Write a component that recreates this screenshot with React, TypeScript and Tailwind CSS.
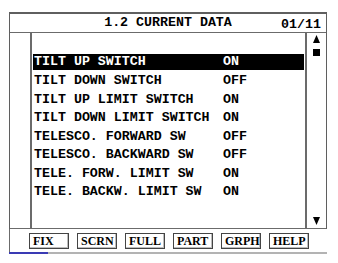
import React from "react";

type Row = { label: string; value: string };

const rows: Row[] = [
  { label: "TILT UP SWITCH", value: "ON" },
  { label: "TILT DOWN SWITCH", value: "OFF" },
  { label: "TILT UP LIMIT SWITCH", value: "ON" },
  { label: "TILT DOWN LIMIT SWITCH", value: "ON" },
  { label: "TELESCO. FORWARD SW", value: "OFF" },
  { label: "TELESCO. BACKWARD SW", value: "OFF" },
  { label: "TELE. FORW. LIMIT SW", value: "ON" },
  { label: "TELE. BACKW. LIMIT SW", value: "ON" },
];

const buttons = ["FIX", "SCRN", "FULL", "PART", "GRPH", "HELP"];

export default function App() {
  const selected = 0;

  return (
    <div className="w-[338px] h-[263px] bg-white pt-[12px] pl-[9px] font-['Liberation_Mono',monospace] text-black">
      <div className="w-[318px]">
        {/* Frame */}
        <div className="border-t-2 border-x border-[#5f5f5f]">
          {/* Header */}
          <div className="relative h-[19px] border-b border-[#6b6b6b] flex items-center justify-center text-[13.3px] font-bold leading-none">
            <span>1.2 CURRENT DATA</span>
            <span className="absolute right-[5px] top-[4px]">01/11</span>
          </div>

          {/* Body */}
          <div className="h-[196px] border-b border-[#6b6b6b] flex">
            <div className="w-[22px] border-r-2 border-[#6b6b6b]" />
            <div className="flex-1 pt-[19.7px]">
              {rows.map((r, i) => (
                <div key={r.label} className="h-[18.6px] flex items-center">
                  <div
                    className={`mx-[1px] flex-1 h-[16px] flex items-center pl-[1px] text-[13.3px] font-bold leading-none ${
                      i === selected ? "bg-black text-white" : ""
                    }`}
                  >
                    <span className="w-[189px] whitespace-pre">{r.label}</span>
                    <span>{r.value}</span>
                  </div>
                </div>
              ))}
            </div>
            {/* Scroll column */}
            <div className="w-[21px] border-l-2 border-[#6b6b6b] flex flex-col items-center pt-[2px] pb-[3px]">
              <svg width="7" height="8" viewBox="0 0 7 8" className="block">
                <polygon points="3.5,0 7,8 0,8" fill="#000" />
              </svg>
              <div className="w-[7px] h-[7px] bg-black mt-[6px]" />
              <div className="flex-1" />
              <svg width="7" height="8" viewBox="0 0 7 8" className="block">
                <polygon points="0,0 7,0 3.5,8" fill="#000" />
              </svg>
            </div>
          </div>
        </div>

        {/* Button row */}
        <div className="h-[23px] border-l border-[#6b6b6b] pl-[19px] pt-[4px] flex gap-[8px]">
          {buttons.map((b) => (
            <div
              key={b}
              className="w-[40px] h-[16px] border border-[#444] bg-white shadow-[inset_-1px_-1px_0_#bdbdbd] flex items-center pl-[3px] font-['Liberation_Serif',serif] font-bold text-[12px] leading-none"
            >
              {b}
            </div>
          ))}
        </div>

        {/* Status line */}
        <div className="flex h-[2px]">
          <div className="w-[39px] bg-[#3a3ab4]" />
          <div className="flex-1 bg-[#b3b3b3]" />
        </div>
      </div>
    </div>
  );
}
